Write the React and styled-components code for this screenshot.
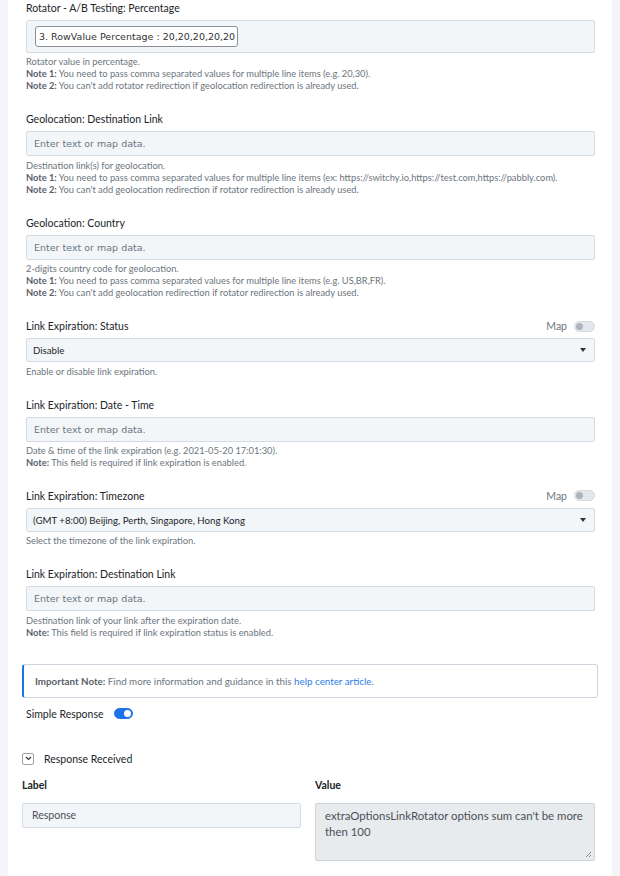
import React from "react";
import styled, { createGlobalStyle } from "styled-components";

const Global = createGlobalStyle`
  html, body { margin: 0; padding: 0; background: #f3f5f8; }
  body { font-family: Lato, "Open Sans", sans-serif; color: #212529; }
  * { box-sizing: border-box; }
`;

const Card = styled.div`
  margin: 0 8px;
  background: #fff;
  min-height: 876px;
  padding: 1px 14px 0 14px;
`;

const Field = styled.div`
  padding: 0 3px 0 4px;
  margin-bottom: 20px;
`;

const LabelRow = styled.div`
  display: flex;
  align-items: center;
  justify-content: space-between;
  margin-bottom: 5px;
  height: 14px;
`;

const Label = styled.div`
  font-size: 10.5px;
  line-height: 14px;
  color: #212529;
`;

const MapSwitch = styled.div`
  display: flex;
  align-items: center;
  gap: 7px;
  font-size: 10.5px;
  color: #6c757d;
`;

const Track = styled.span`
  position: relative;
  display: inline-block;
  width: ${(p) => (p.$on ? "19px" : "21px")};
  height: 11px;
  border-radius: 6px;
  background: ${(p) => (p.$on ? "#1a73e8" : "#e4e7eb")};
  border: 1px solid ${(p) => (p.$on ? "#1a73e8" : "#d5d9de")};
`;

const Knob = styled.span`
  position: absolute;
  top: 1px;
  left: ${(p) => (p.$on ? "9px" : "1px")};
  width: 7px;
  height: 7px;
  border-radius: 50%;
  background: ${(p) => (p.$on ? "#fff" : "#aeb4bb")};
`;

const InputBox = styled.div`
  display: flex;
  align-items: center;
  height: ${(p) => (p.$tall ? "33px" : "25px")};
  background: #f3f6f9;
  border: 1px solid #d5dbe2;
  border-radius: 2px;
  padding: 0 7px 0 ${(p) => (p.$tall ? "8px" : "7px")};
  font-family: "DejaVu Sans", Verdana, sans-serif;
  font-size: 9.5px;
  color: #6c757d;
`;

const Chip = styled.span`
  display: inline-flex;
  align-items: center;
  height: 21px;
  padding: 0 2px 0 3px;
  background: #fff;
  border: 1px solid #8a8f95;
  border-radius: 3px;
  color: #333;
  font-family: "DejaVu Sans", Verdana, sans-serif;
  font-size: 9.5px;
`;

const Select = styled.div`
  display: flex;
  align-items: center;
  justify-content: space-between;
  height: 24px;
  background: #f3f6f9;
  border: 1px solid #d5dbe2;
  border-radius: 2px;
  padding: 0 8px 0 6px;
  font-size: 9.7px;
  color: #212529;
`;

const Caret = styled.span`
  width: 0;
  height: 0;
  border-left: 3px solid transparent;
  border-right: 3px solid transparent;
  border-top: 4px solid #333;
`;

const Help = styled.div`
  margin-top: 3.4px;
  font-size: 9.3px;
  line-height: 12px;
  color: #6c757d;
  b { font-weight: 700; color: #5a6169; }
`;

const Note = styled.div`
  display: flex;
  align-items: center;
  height: 34px;
  border: 1px solid #cdd4de;
  border-left: 2px solid #1a73e8;
  border-radius: 3px;
  padding-left: 11px;
  margin-top: 25px;
  font-size: 9.8px;
  color: #6c757d;
  b { color: #5a6169; }
  a { color: #2b7de9; text-decoration: none; }
`;

const SimpleRow = styled.div`
  display: flex;
  align-items: center;
  gap: 10px;
  padding-left: 4px;
  margin-top: 10px;
  font-size: 10.5px;
  color: #212529;
`;

const CollapseRow = styled.div`
  display: flex;
  align-items: center;
  gap: 10px;
  margin-top: 33px;
  font-size: 10.5px;
  color: #212529;
`;

const ChevronBox = styled.span`
  display: inline-flex;
  align-items: center;
  justify-content: center;
  width: 12px;
  height: 12px;
  border: 1px solid #9aa1a8;
  border-radius: 2px;
  background: #fff;
`;

const Grid = styled.div`
  display: grid;
  grid-template-columns: 279px 280px;
  column-gap: 14px;
  margin-top: 13px;
`;

const ColHead = styled.div`
  font-size: 10.5px;
  font-weight: 700;
  line-height: 14px;
  margin-bottom: 11px;
  color: #212529;
`;

const ResponseInput = styled.div`
  display: flex;
  align-items: center;
  height: 25px;
  background: #f3f6f9;
  border: 1px solid #d5dbe2;
  border-radius: 2px;
  padding: 0 9px;
  font-size: 10.5px;
  color: #495057;
`;

const TextArea = styled.div`
  position: relative;
  height: 58px;
  background: #e8ebee;
  border: 1px solid #ced4da;
  border-radius: 2px;
  padding: 4px 9px;
  font-size: 11.4px;
  line-height: 16px;
  color: #495057;
`;

const Grip = styled.svg`
  position: absolute;
  right: 2px;
  bottom: 2px;
`;

function MapToggle() {
  return (
    <MapSwitch>
      Map
      <Track>
        <Knob />
      </Track>
    </MapSwitch>
  );
}

function TextField({ label, help, map }) {
  return (
    <Field>
      <LabelRow>
        <Label>{label}</Label>
        {map && <MapToggle />}
      </LabelRow>
      <InputBox>Enter text or map data.</InputBox>
      <Help>{help}</Help>
    </Field>
  );
}

function SelectField({ label, value, help }) {
  return (
    <Field>
      <LabelRow>
        <Label>{label}</Label>
        <MapToggle />
      </LabelRow>
      <Select>
        {value}
        <Caret />
      </Select>
      <Help>{help}</Help>
    </Field>
  );
}

export default function App() {
  return (
    <>
      <Global />
      <Card>
        <Field>
          <LabelRow>
            <Label>Rotator - A/B Testing: Percentage</Label>
          </LabelRow>
          <InputBox $tall>
            <Chip>3. RowValue Percentage : 20,20,20,20,20</Chip>
          </InputBox>
          <Help>
            Rotator value in percentage.
            <br />
            <b>Note 1:</b> You need to pass comma separated values for multiple line items (e.g. 20,30).
            <br />
            <b>Note 2:</b> You can't add rotator redirection if geolocation redirection is already used.
          </Help>
        </Field>

        <TextField
          label="Geolocation: Destination Link"
          help={
            <>
              Destination link(s) for geolocation.
              <br />
              <b>Note 1:</b> You need to pass comma separated values for multiple line items (ex: https://switchy.io,https://test.com,https://pabbly.com).
              <br />
              <b>Note 2:</b> You can't add geolocation redirection if rotator redirection is already used.
            </>
          }
        />

        <TextField
          label="Geolocation: Country"
          help={
            <>
              2-digits country code for geolocation.
              <br />
              <b>Note 1:</b> You need to pass comma separated values for multiple line items (e.g. US,BR,FR).
              <br />
              <b>Note 2:</b> You can't add geolocation redirection if rotator redirection is already used.
            </>
          }
        />

        <SelectField
          label="Link Expiration: Status"
          value="Disable"
          help="Enable or disable link expiration."
        />

        <TextField
          label="Link Expiration: Date - Time"
          help={
            <>
              Date &amp; time of the link expiration (e.g. 2021-05-20 17:01:30).
              <br />
              <b>Note:</b> This field is required if link expiration is enabled.
            </>
          }
        />

        <SelectField
          label="Link Expiration: Timezone"
          value="(GMT +8:00) Beijing, Perth, Singapore, Hong Kong"
          help="Select the timezone of the link expiration."
        />

        <TextField
          label="Link Expiration: Destination Link"
          help={
            <>
              Destination link of your link after the expiration date.
              <br />
              <b>Note:</b> This field is required if link expiration status is enabled.
            </>
          }
        />

        <Note>
          <span>
            <b>Important Note:</b> Find more information and guidance in this{" "}
            <a href="#">help center article</a>.
          </span>
        </Note>

        <SimpleRow>
          Simple Response
          <Track $on>
            <Knob $on />
          </Track>
        </SimpleRow>

        <CollapseRow>
          <ChevronBox>
            <svg width="7" height="5" viewBox="0 0 7 5">
              <path d="M1 1l2.5 2.5L6 1" fill="none" stroke="#333" strokeWidth="1.2" />
            </svg>
          </ChevronBox>
          Response Received
        </CollapseRow>

        <Grid>
          <div>
            <ColHead>Label</ColHead>
            <ResponseInput>Response</ResponseInput>
          </div>
          <div>
            <ColHead>Value</ColHead>
            <TextArea>
              extraOptionsLinkRotator options sum can't be more then 100
              <Grip width="7" height="7" viewBox="0 0 7 7">
                <path d="M6 1L1 6M6 4L4 6" stroke="#777" strokeWidth="0.8" />
              </Grip>
            </TextArea>
          </div>
        </Grid>
      </Card>
    </>
  );
}
